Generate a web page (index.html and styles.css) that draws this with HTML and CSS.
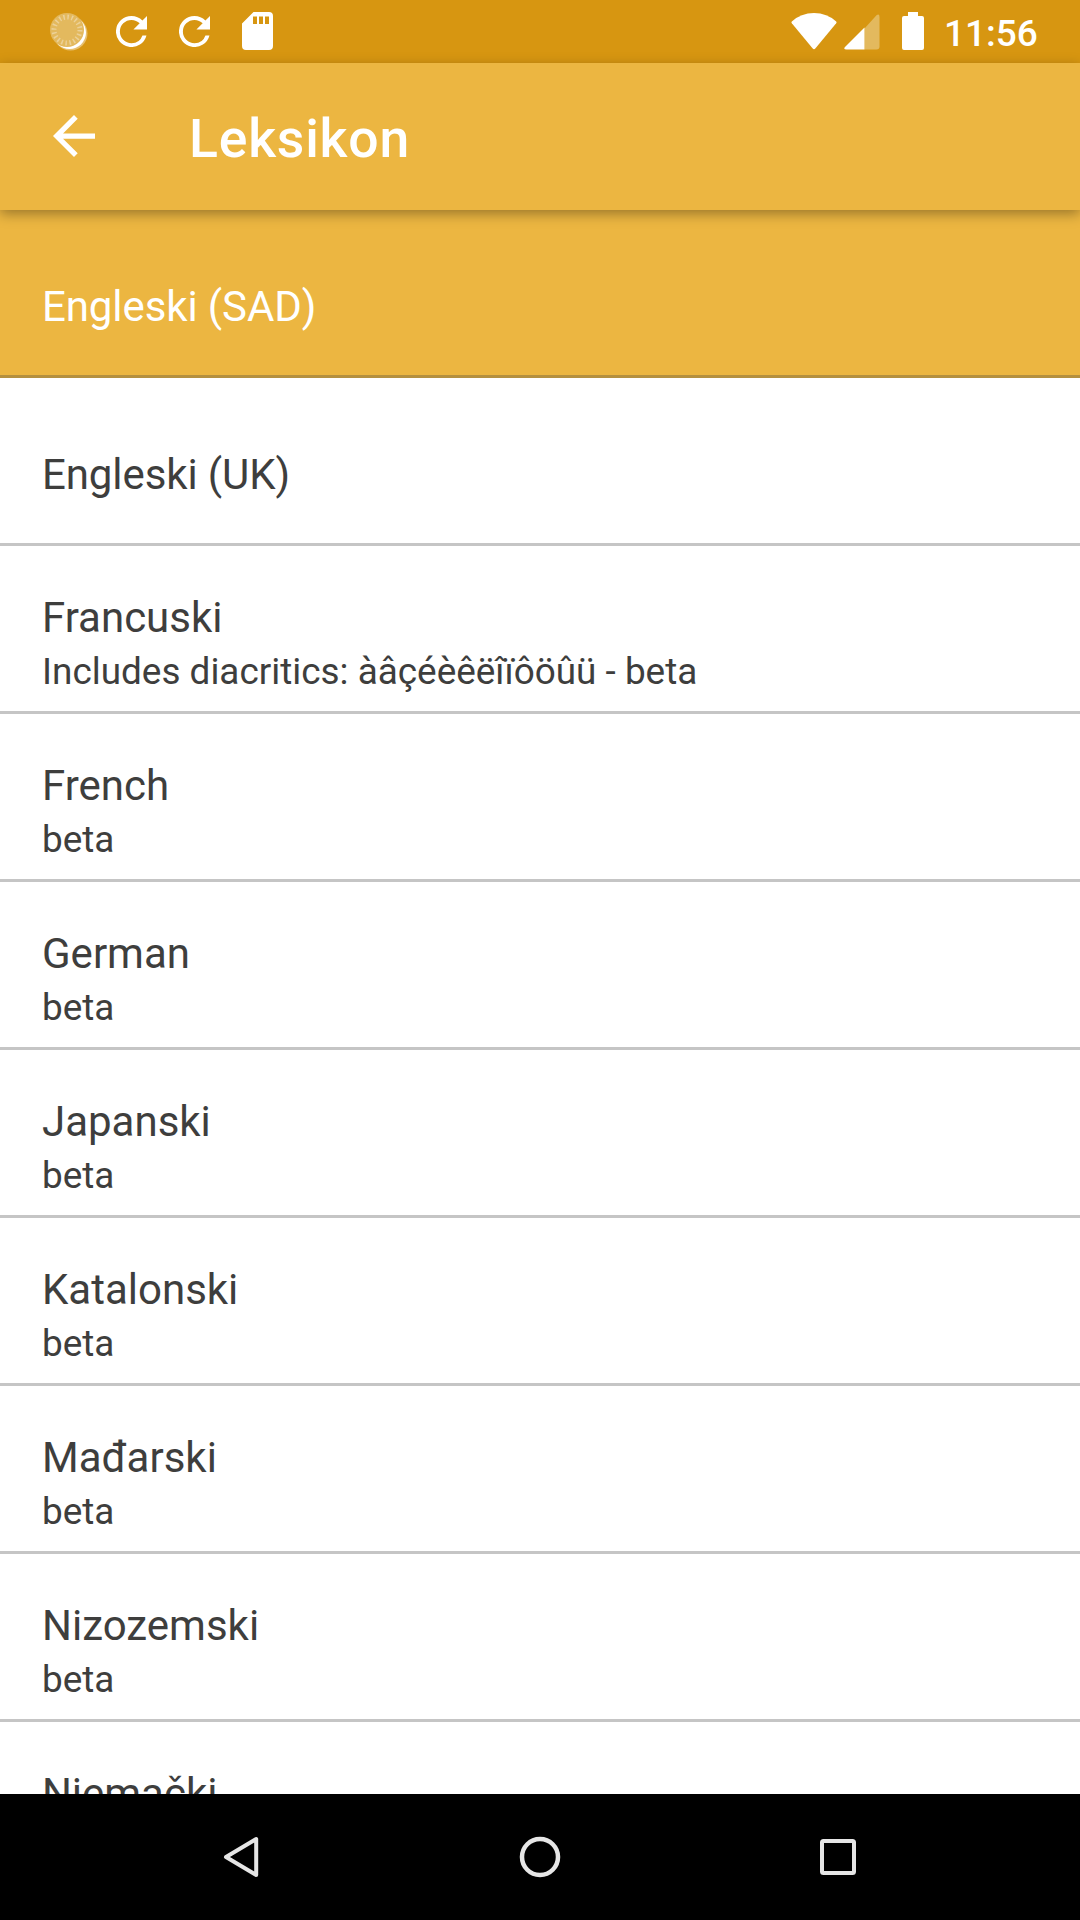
FILE: index.html
```html
<!DOCTYPE html>
<html lang="hr">
<head>
<meta charset="utf-8">
<title>Leksikon</title>
<link rel="stylesheet" href="styles.css">
</head>
<body>
<div class="screen">
  <header class="status-bar">
    <div class="notifications">
      <svg class="icon-spinner" width="38" height="40" viewBox="0 0 38 40">
        <circle cx="20.500" cy="21.500" r="17" fill="#fff" opacity=".4"/>
        <circle cx="19.500" cy="20.500" r="16.500" fill="#fff"/>
        <circle cx="17" cy="18" r="17" fill="#e3b95e"/>
        <circle cx="17" cy="18" r="13" fill="none" stroke="#ecd198" stroke-width="5" stroke-dasharray="1.500 2.584"/>
      </svg>
      <svg class="icon-refresh" width="31" height="31" viewBox="4 4 16 16"><path fill="#fff" d="M17.650 6.350A7.958 7.958 0 0 0 12 4a8 8 0 1 0 7.730 10h-2.080A5.990 5.990 0 0 1 12 18a6 6 0 1 1 0-12c1.660 0 3.140.690 4.220 1.780L13 11h7V4z"/></svg>
      <svg class="icon-refresh second" width="31" height="31" viewBox="4 4 16 16"><path fill="#fff" d="M17.650 6.350A7.958 7.958 0 0 0 12 4a8 8 0 1 0 7.730 10h-2.080A5.990 5.990 0 0 1 12 18a6 6 0 1 1 0-12c1.660 0 3.140.690 4.220 1.780L13 11h7V4z"/></svg>
      <svg class="icon-card" width="31" height="38" viewBox="0 0 31 38"><path fill="#fff" fill-rule="evenodd" d="M11.500 0H27a4 4 0 0 1 4 4v30a4 4 0 0 1-4 4H4a4 4 0 0 1-4-4V11.500zM11 4.500v7.500h4V4.500zm6 0v7.500h4V4.500zm6 0v7.500h4V4.500z"/></svg>
    </div>
    <div class="system">
      <svg class="icon-wifi" width="46" height="37" viewBox="0 0 46 37"><path fill="#fff" d="M.8 8.500Q10 0 23 0t22.200 8.500q.7.800 0 1.800L24.500 35.300q-1.500 1.800-3 0L.8 10.300q-.7-1 0-1.800z"/></svg>
      <svg class="icon-signal" width="36" height="36" viewBox="0 0 36 36"><path fill="#e3b95e" d="M20.500 14.500L32.500 1.200Q35.500-.8 35.500 3v29.500q0 3-3 3h-12z"/><path fill="#fff" d="M20.500 13.500v22H2.500Q-1 35.500 1 33z"/></svg>
      <svg class="icon-battery" width="22" height="38" viewBox="0 0 22 38"><path fill="#fff" d="M6 0h10v4h4a2 2 0 0 1 2 2v30a2 2 0 0 1-2 2H2a2 2 0 0 1-2-2V6a2 2 0 0 1 2-2h4z"/></svg>
      <span class="clock">11:56</span>
    </div>
  </header>
  <div class="app-bar">
    <svg class="icon-back" width="42" height="42" viewBox="4 4 16 16"><path fill="#fff" d="M20 11H7.830l5.590-5.590L12 4l-8 8 8 8 1.410-1.410L7.830 13H20z"/></svg>
    <h1 class="title">Leksikon</h1>
  </div>
  <ul class="list">
    <li class="row single selected"><span class="name">Engleski (SAD)</span></li>
    <li class="row single"><span class="name">Engleski (UK)</span></li>
    <li class="row"><span class="name">Francuski</span><span class="note">Includes diacritics: àâçéèêëîïôöûü - beta</span></li>
    <li class="row"><span class="name">French</span><span class="note">beta</span></li>
    <li class="row"><span class="name">German</span><span class="note">beta</span></li>
    <li class="row"><span class="name">Japanski</span><span class="note">beta</span></li>
    <li class="row"><span class="name">Katalonski</span><span class="note">beta</span></li>
    <li class="row"><span class="name">Mađarski</span><span class="note">beta</span></li>
    <li class="row"><span class="name">Nizozemski</span><span class="note">beta</span></li>
    <li class="row"><span class="name">Njemački</span></li>
  </ul>
  <nav class="nav-bar">
    <svg width="44" height="44" viewBox="0 0 44 44"><path d="M36.200 4v36L6 22z" fill="none" stroke="#e6e6e6" stroke-width="4" stroke-linejoin="round"/></svg>
    <svg width="44" height="44" viewBox="0 0 44 44"><circle cx="22" cy="22" r="18" fill="none" stroke="#e6e6e6" stroke-width="4.500"/></svg>
    <svg width="44" height="44" viewBox="0 0 44 44"><rect x="6" y="6" width="32" height="32" rx="1.500" fill="none" stroke="#e6e6e6" stroke-width="4"/></svg>
  </nav>
</div>
</body>
</html>
```
FILE: styles.css
```css
* { box-sizing: border-box; }
body { margin: 0; font-family: Roboto, "Noto Sans", sans-serif; color: #3e3e3d; }
svg { display: block; flex: none; }
.screen { display: flex; flex-direction: column; width: 1080px; height: 1920px; overflow: hidden; background: #fff; }
.status-bar { display: flex; justify-content: space-between; height: 63px; flex: none; padding: 0 43px 0 50px; background: #d79611; }
.notifications, .system { display: flex; align-items: flex-start; }
.icon-spinner { margin-top: 12px; }
.icon-refresh { margin: 16px 0 0 28px; }
.icon-refresh.second { margin-left: 32px; }
.icon-card { margin: 12px 0 0 32px; }
.icon-wifi { margin-top: 13px; }
.icon-signal { margin: 14px 0 0 7px; }
.icon-battery { margin: 12px 0 0 22px; }
.clock { width: 93px; margin: 12px 0 0 20px; color: #fff; font-size: 37px; font-weight: 500; line-height: 44px; white-space: nowrap; }
.app-bar { position: relative; z-index: 1; display: flex; align-items: center; gap: 94.500px; height: 147px; flex: none; padding-left: 52.500px; background: #ecb641; box-shadow: 0 4px 12px rgba(0, 0, 0, .34); }
.icon-back { margin-top: -1px; }
.title { margin: 5px 0 0; color: #fff; font-size: 53.500px; font-weight: 500; line-height: 64px; letter-spacing: .8px; }
.list { flex: 1; min-height: 0; margin: 0; padding: 0; overflow: hidden; list-style: none; }
.row { display: flex; flex-direction: column; height: 168px; padding: 47px 42px 0; border-bottom: 3px solid #c5c5c5; }
.row.single { padding-top: 72px; letter-spacing: -.1px; }
.row.selected { color: #fff; background: #ecb641; border-bottom-color: #b4903f; }
.name { font-size: 42px; line-height: 50px; }
.note { margin-top: 7px; font-size: 36.900px; line-height: 44px; white-space: nowrap; }
.nav-bar { display: flex; justify-content: center; align-items: center; gap: 254px; height: 126px; flex: none; background: #000; }
```
